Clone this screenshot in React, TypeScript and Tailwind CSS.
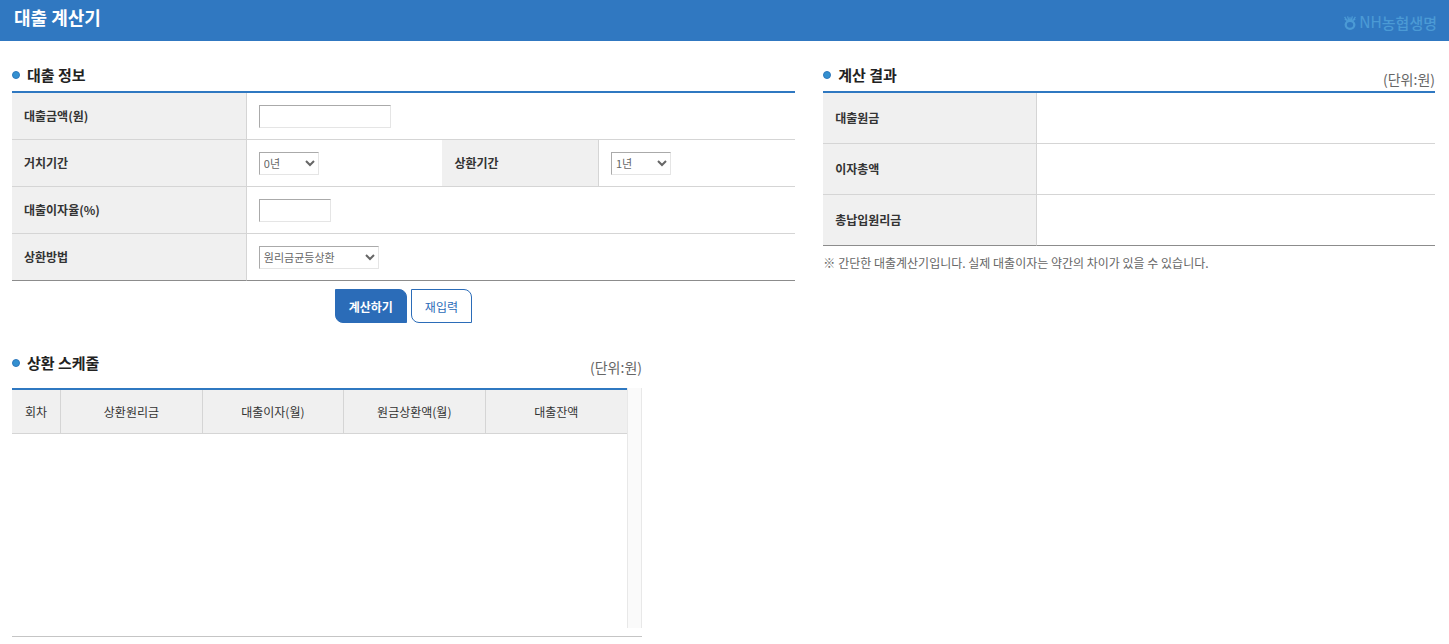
import type { ReactNode } from 'react';

const years = (from: number) => Array.from({ length: 30 }, (_, i) => `${i + from}년`);

const labelCell = 'border-r border-b border-[#d5d5d5] bg-[#f0f0f0] pl-3 text-left font-bold text-[#333]';
const valueCell = 'border-b border-[#d5d5d5] pl-3';
const darkBottom = 'border-b-[#8c8c8c]';
const field =
  'block h-[23px] border border-t-[#aaa] border-r-[#e5e5e5] border-b-[#e5e5e5] border-l-[#aaa] bg-white text-[11px] text-[#666]';

function SectionTitle({ title, unit }: { title: string; unit?: boolean }) {
  return (
    <div className="flex h-6 items-center justify-between">
      <h2 className="flex items-center gap-[7px] text-[15px] font-bold text-[#222]">
        <span className="size-2 rounded-full border border-[#2f78bd] bg-[#3390d0]" />
        {title}
      </h2>
      {unit && <span className="pt-2 text-[14px] text-[#666]">(단위:원)</span>}
    </div>
  );
}

function Choice({ id, options, className }: { id: string; options: string[]; className: string }) {
  return (
    <select id={id} className={`${field} ${className}`}>
      {options.map((o) => (
        <option key={o}>{o}</option>
      ))}
    </select>
  );
}

function Label({ id, children, className = '' }: { id: string; children: ReactNode; className?: string }) {
  return (
    <th scope="row" className={`${labelCell} ${className}`}>
      <label htmlFor={id}>{children}</label>
    </th>
  );
}

function Logo() {
  return (
    <div className="flex items-center gap-[3px] text-[#4b9ad5]">
      <svg viewBox="0 0 12 14" className="h-[14px] w-3" fill="none" stroke="currentColor" aria-hidden="true">
        <path d="M0.6 0.8 2.8 4.4M3.6 0.4 4.8 4.2M6 1.2v3M8.4 0.4 7.2 4.2M11.4 0.8 9.2 4.4" strokeWidth="1.3" />
        <path d="M0.8 3.2C2.6 4.9 9.4 4.9 11.2 3.2" strokeWidth="1.4" />
        <ellipse cx="6" cy="8.8" rx="4.3" ry="4" strokeWidth="2.3" />
      </svg>
      <span className="flex items-center leading-4">
        <span className="font-['DejaVu_Sans',sans-serif] text-[15px]">NH</span>
        <span className="text-[15px] font-medium">농협생명</span>
      </span>
    </div>
  );
}

export default function App() {
  return (
    <div className="bg-white font-['Noto_Sans_CJK_KR',sans-serif] text-[12px] leading-5 text-[#333]">
      <header className="flex h-[41px] items-center justify-between bg-[#3078c1] pr-3 pl-[14px]">
        <h1 className="pb-2 text-[18px] font-bold text-white">대출 계산기</h1>
        <div className="pt-1">
          <Logo />
        </div>
      </header>

      <main className="pr-[14px] pl-3">
        <div className="flex items-start justify-between pt-[22px]">
          <form className="w-[55%]" onSubmit={(e) => e.preventDefault()}>
            <SectionTitle title="대출 정보" />
            <table className="mt-1 w-full table-fixed border-separate border-spacing-0 border-t-2 border-[#2f78c1]">
              <colgroup>
                <col className="w-[30%]" />
                <col className="w-[25%]" />
                <col className="w-[20%]" />
                <col className="w-[25%]" />
              </colgroup>
              <tbody>
                <tr className="h-[47px]">
                  <Label id="amount">대출금액(원)</Label>
                  <td colSpan={3} className={valueCell}>
                    <input id="amount" type="text" className={`${field} w-[132px] px-1`} />
                  </td>
                </tr>
                <tr className="h-[47px]">
                  <Label id="grace">거치기간</Label>
                  <td className={valueCell}>
                    <Choice id="grace" options={years(0)} className="w-[60px]" />
                  </td>
                  <Label id="term">상환기간</Label>
                  <td className={valueCell}>
                    <Choice id="term" options={years(1)} className="w-[60px]" />
                  </td>
                </tr>
                <tr className="h-[47px]">
                  <Label id="rate">대출이자율(%)</Label>
                  <td colSpan={3} className={valueCell}>
                    <input id="rate" type="text" className={`${field} w-[72px] px-1`} />
                  </td>
                </tr>
                <tr className="h-[47px]">
                  <Label id="method" className={darkBottom}>
                    상환방법
                  </Label>
                  <td colSpan={3} className={`${valueCell} ${darkBottom}`}>
                    <Choice id="method" options={['원리금균등상환', '원금균등상환', '만기일시상환']} className="w-[120px]" />
                  </td>
                </tr>
              </tbody>
            </table>
            <div className="mt-2 flex justify-center gap-1">
              <button
                type="submit"
                className="h-[34px] rounded-tr-lg rounded-bl-lg border border-[#2b6cb8] bg-[#2b6cb8] px-[13px] pt-[2px] font-bold text-white"
              >
                계산하기
              </button>
              <button
                type="reset"
                className="h-[34px] rounded-tr-lg rounded-bl-lg border border-[#2b6cb8] bg-white px-[13px] pt-[2px] text-[#2b6cb8]"
              >
                재입력
              </button>
            </div>
          </form>

          <section className="w-[43%]">
            <SectionTitle title="계산 결과" unit />
            <table className="mt-1 w-full table-fixed border-separate border-spacing-0 border-t-2 border-[#2f78c1]">
              <colgroup>
                <col className="w-[35%]" />
                <col />
              </colgroup>
              <tbody>
                <tr className="h-[51px]">
                  <th scope="row" className={labelCell}>대출원금</th>
                  <td className={valueCell} />
                </tr>
                <tr className="h-[51px]">
                  <th scope="row" className={labelCell}>이자총액</th>
                  <td className={valueCell} />
                </tr>
                <tr className="h-[51px]">
                  <th scope="row" className={`${labelCell} ${darkBottom}`}>총납입원리금</th>
                  <td className={`${valueCell} ${darkBottom}`} />
                </tr>
              </tbody>
            </table>
            <p className="mt-[7px] flex gap-[3px] text-[#666]">
              <span>※</span>
              <span>간단한 대출계산기입니다. 실제 대출이자는 약간의 차이가 있을 수 있습니다.</span>
            </p>
          </section>
        </div>

        <section className="mt-7 w-[630px] max-w-full border-b border-[#c5c5c5] pb-2">
          <SectionTitle title="상환 스케줄" unit />
          <div className="mt-[13px] flex h-60">
            <div className="flex-1">
              <table className="w-full table-fixed border-separate border-spacing-0 border-t-2 border-[#2f78c1]">
                <colgroup>
                  <col className="w-[8%]" />
                  <col className="w-[23%]" />
                  <col className="w-[23%]" />
                  <col className="w-[23%]" />
                  <col className="w-[23%]" />
                </colgroup>
                <thead>
                  <tr className="h-11">
                    {['회차', '상환원리금', '대출이자(월)', '원금상환액(월)', '대출잔액'].map((h) => (
                      <th
                        key={h}
                        scope="col"
                        className="border-r border-b border-[#d5d5d5] bg-[#f0f0f0] font-normal last:border-r-0"
                      >
                        {h}
                      </th>
                    ))}
                  </tr>
                </thead>
              </table>
            </div>
            <div className="w-[15px] border-x border-[#e8e8e8] bg-[#fafafa]" />
          </div>
        </section>
      </main>
    </div>
  );
}
